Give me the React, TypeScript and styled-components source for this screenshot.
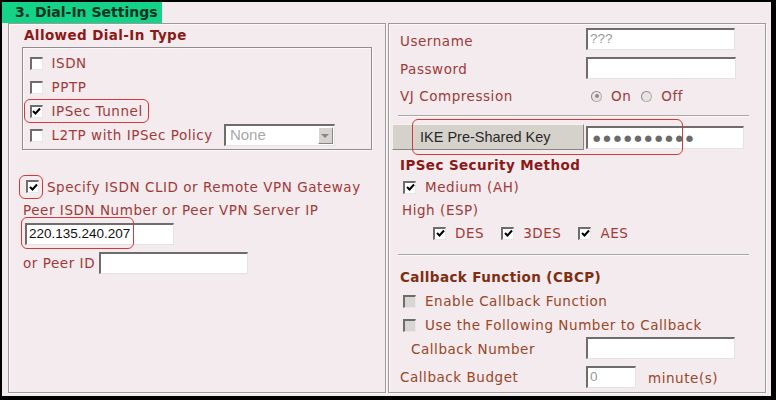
import React, { FC } from "react";
import styled, { createGlobalStyle } from "styled-components";

const GlobalStyle = createGlobalStyle`
  html, body {
    margin: 0;
    padding: 0;
    background: #000;
  }
  * {
    box-sizing: border-box;
  }
`;

const Frame = styled.div`
  width: 776px;
  height: 400px;
  padding: 2px 5px 4px 2px;
  background: #000;
`;

const Page = styled.div`
  width: 769px;
  height: 394px;
  background: #f3ebed;
  font-family: "DejaVu Sans", Verdana, sans-serif;
  font-size: 13.5px;
  letter-spacing: 0.55px;
  color: #a03a3a;
  display: flex;
  flex-direction: column;
`;

const Tab = styled.div`
  width: 160px;
  height: 21px;
  background: #14d288;
  color: #0c3322;
  font-weight: bold;
  font-size: 14px;
  letter-spacing: 0;
  line-height: 21px;
  padding-left: 13px;
  white-space: nowrap;
`;

const Panels = styled.div`
  display: flex;
  gap: 2px;
  padding-left: 6px;
  height: 370px;
`;

const Panel = styled.div<{ $width: number }>`
  width: ${(p) => p.$width}px;
  height: 100%;
  border: 1px solid #9c9a9a;
  box-shadow: inset 1px 1px 0 #fbf8f8, 1px 1px 0 #fbf8f8;
  display: flex;
  flex-direction: column;
`;

const Heading = styled.div<{ $brown?: boolean }>`
  font-weight: bold;
  font-size: 13.5px;
  letter-spacing: 0.4px;
  color: ${(p) => (p.$brown ? "#7e2e12" : "#8c1818")};
  line-height: 20px;
  white-space: nowrap;
`;

const Box = styled.div`
  margin: 2px 0 0 8px;
  width: 350px;
  height: 103px;
  border: 1px solid #8f8d8d;
  box-shadow: inset 1px 1px 0 #fbf8f8, 1px 1px 0 #fbf8f8;
  padding: 3px 0 0 1px;
  display: flex;
  flex-direction: column;
`;

const Row = styled.div<{ $h?: number; $mt?: number; $pl?: number }>`
  display: flex;
  align-items: center;
  height: ${(p) => p.$h ?? 24}px;
  margin-top: ${(p) => p.$mt ?? 0}px;
  padding-left: ${(p) => p.$pl ?? 0}px;
  white-space: nowrap;
  position: relative;
`;

const Mark = styled.div<{ $on?: boolean }>`
  display: inline-flex;
  align-items: center;
  height: 24px;
  padding: 0 5px 0 4.5px;
  border: 1.5px solid ${(p) => (p.$on ? "#d23a3a" : "transparent")};
  border-radius: 6px;
`;

const Box13 = styled.span<{ $disabled?: boolean }>`
  display: inline-flex;
  align-items: center;
  justify-content: center;
  width: 13px;
  height: 13px;
  flex: none;
  background: ${(p) => (p.$disabled ? "#d9d5d2" : "#fff")};
  border-style: solid;
  border-width: 2px 1px 1px 2px;
  border-color: #6e6c6c #e9e6e6 #e9e6e6 #6e6c6c;
`;

const Label = styled.span<{ $ml?: number; $brown?: boolean }>`
  margin-left: ${(p) => p.$ml ?? 9}px;
  color: ${(p) => (p.$brown ? "#9a4628" : "#a03a3a")};
`;

const Check: FC<{ checked?: boolean; disabled?: boolean }> = ({
  checked,
  disabled,
}) => (
  <Box13 $disabled={disabled}>
    {checked && (
      <svg width="9" height="9" viewBox="0 0 9 9">
        <path d="M1 4 L3.5 6.5 L8 1.5" stroke="#000" strokeWidth="2" fill="none" />
      </svg>
    )}
  </Box13>
);

const Radio = styled.span<{ $on?: boolean }>`
  display: inline-flex;
  align-items: center;
  justify-content: center;
  width: 11px;
  height: 11px;
  border-radius: 50%;
  background: #e8e4e2;
  border: 1px solid #b4b0ae;
  border-top-color: #8e8a88;
  border-left-color: #8e8a88;
  &::after {
    content: "";
    width: 4px;
    height: 4px;
    border-radius: 50%;
    background: ${(p) => (p.$on ? "#8e8a88" : "transparent")};
  }
`;

const Input = styled.div<{ $w: number; $h?: number; $gray?: boolean }>`
  width: ${(p) => p.$w}px;
  height: ${(p) => p.$h ?? 22}px;
  flex: none;
  background: #fff;
  border-style: solid;
  border-width: 2px 1px 1px 2px;
  border-color: #6e6c6c #e6e2e2 #e6e2e2 #6e6c6c;
  font-family: "Liberation Sans", Arial, sans-serif;
  font-size: 13.5px;
  letter-spacing: 0;
  line-height: 18px;
  padding-left: 2px;
  color: ${(p) => (p.$gray ? "#9a9a9a" : "#111")};
  overflow: hidden;
  white-space: nowrap;
`;

const Select = styled.div`
  margin-left: 5px;
  width: 111px;
  height: 22px;
  display: flex;
  background: #fff;
  border-style: solid;
  border-width: 2px 1px 1px 2px;
  border-color: #6e6c6c #e6e2e2 #e6e2e2 #6e6c6c;
  font-family: "Liberation Sans", Arial, sans-serif;
  font-size: 15px;
  letter-spacing: 0;
  color: #a8a8a8;
`;

const SelectText = styled.span`
  flex: 1;
  padding-left: 4px;
  line-height: 18px;
`;

const SelectArrow = styled.span`
  width: 15px;
  margin: 1px;
  background: #d6d2ce;
  border: 1px solid #fff;
  border-right-color: #8a8686;
  border-bottom-color: #8a8686;
  display: flex;
  align-items: center;
  justify-content: center;
  &::after {
    content: "";
    border-left: 4px solid transparent;
    border-right: 4px solid transparent;
    border-top: 4px solid #8a8686;
  }
`;

const Highlight = styled.div<{ $l: number; $t: number; $w: number; $h: number }>`
  position: absolute;
  left: ${(p) => p.$l}px;
  top: ${(p) => p.$t}px;
  width: ${(p) => p.$w}px;
  height: ${(p) => p.$h}px;
  border: 1.5px solid #d23a3a;
  border-radius: 6px;
  pointer-events: none;
`;

const Text = styled.div<{ $mt?: number; $pl?: number }>`
  margin-top: ${(p) => p.$mt ?? 0}px;
  padding-left: ${(p) => p.$pl ?? 0}px;
  line-height: 22px;
  white-space: nowrap;
`;

const LeftBody = styled.div`
  padding: 1px 0 0 5px;
  display: flex;
  flex-direction: column;
`;

const RightBody = styled.div`
  padding: 4px 0 0 11px;
  display: flex;
  flex-direction: column;
`;

const FieldRow = styled.div<{ $mt?: number; $h?: number; $brown?: boolean }>`
  display: grid;
  grid-template-columns: 186px auto 1fr;
  align-items: center;
  height: ${(p) => p.$h ?? 22}px;
  margin-top: ${(p) => p.$mt ?? 0}px;
  white-space: nowrap;
  color: ${(p) => (p.$brown ? "#9a4628" : "#a03a3a")};
`;

const FieldLabel = styled.span<{ $indent?: number; $drop?: number }>`
  padding-top: ${(p) => p.$drop ?? 2}px;
  padding-left: ${(p) => p.$indent ?? 0}px;
`;

const Inline = styled.div`
  display: flex;
  align-items: center;
  padding: 0 0 0 5px;
`;

const Separator = styled.div<{ $mt: number }>`
  margin: ${(p) => p.$mt}px 16px 0 -2px;
  height: 2px;
  border-top: 1px solid #a8a6a6;
  border-bottom: 1px solid #fbf8f8;
`;

const KeyRow = styled.div`
  display: flex;
  align-items: flex-start;
  margin: 7px 0 0 -8px;
  height: 27px;
  position: relative;
`;

const KeyButton = styled.div`
  width: 192px;
  height: 26px;
  background: #d5d1cb;
  border: 1px solid #f4f2ee;
  border-right-color: #8a8682;
  border-bottom-color: #8a8682;
  font-family: "Liberation Sans", Arial, sans-serif;
  font-size: 14.5px;
  letter-spacing: 0;
  color: #2a2a2a;
  line-height: 24px;
  padding-left: 27px;
`;

const Dots = styled.span`
  font-family: "DejaVu Sans", sans-serif;
  font-size: 8.5px;
  letter-spacing: 2.9px;
  color: #6a6a6a;
  line-height: 19px;
  padding-left: 3px;
`;

const Spacer = styled.span<{ $w: number }>`
  width: ${(p) => p.$w}px;
  flex: none;
`;

const App: FC = () => {
  return (
    <Frame>
      <GlobalStyle />
      <Page>
        <Tab>3. Dial-In Settings</Tab>
        <Panels>
          <Panel $width={378}>
            <LeftBody>
              <Heading style={{ paddingLeft: 10 }}>Allowed Dial-In Type</Heading>
              <Box>
                <Row>
                  <Mark>
                    <Check />
                    <Label>ISDN</Label>
                  </Mark>
                </Row>
                <Row>
                  <Mark>
                    <Check />
                    <Label>PPTP</Label>
                  </Mark>
                </Row>
                <Row>
                  <Mark $on>
                    <Check checked />
                    <Label>IPSec Tunnel</Label>
                  </Mark>
                </Row>
                <Row>
                  <Mark>
                    <Check />
                    <Label>L2TP with IPSec Policy</Label>
                  </Mark>
                  <Select>
                    <SelectText>None</SelectText>
                    <SelectArrow />
                  </Select>
                </Row>
              </Box>
              <Row $mt={24} $h={25} $pl={5}>
                <Mark $on style={{ padding: "0 3px 0 6px" }}>
                  <Check checked />
                </Mark>
                <Label $ml={4}>Specify ISDN CLID or Remote VPN Gateway</Label>
              </Row>
              <Text $pl={9}>Peer ISDN Number or Peer VPN Server IP</Text>
              <Row $mt={2} $h={22} $pl={11}>
                <Input $w={149}>220.135.240.207</Input>
                <Highlight $l={7} $t={-6} $w={113} $h={32} />
              </Row>
              <Row $mt={7} $h={22} $pl={9}>
                <Text>or Peer ID</Text>
                <Input $w={149} style={{ marginLeft: 4 }} />
              </Row>
            </LeftBody>
          </Panel>
          <Panel $width={378}>
            <RightBody>
              <FieldRow>
                <FieldLabel $drop={3}>Username</FieldLabel>
                <Input $w={149} $gray>
                  ???
                </Input>
              </FieldRow>
              <FieldRow $mt={7}>
                <FieldLabel>Password</FieldLabel>
                <Input $w={150} />
              </FieldRow>
              <FieldRow $mt={6}>
                <FieldLabel $drop={0}>VJ Compression</FieldLabel>
                <Inline>
                  <Radio $on />
                  <Label $ml={9}>On</Label>
                  <Radio style={{ marginLeft: 10 }} />
                  <Label $ml={9}>Off</Label>
                </Inline>
              </FieldRow>
              <Separator $mt={8} />
              <KeyRow>
                <KeyButton>IKE Pre-Shared Key</KeyButton>
                <Input $w={158} $h={23} style={{ marginLeft: 2, marginTop: 2 }}>
                  <Dots>●●●●●●●●●●</Dots>
                </Input>
                <Highlight $l={20} $t={-5} $w={271} $h={36} />
              </KeyRow>
              <Heading style={{ marginTop: 4 }}>IPSec Security Method</Heading>
              <Row $h={24} $pl={3}>
                <Check checked />
                <Label>Medium (AH)</Label>
              </Row>
              <Text $pl={2}>High (ESP)</Text>
              <Row $h={24} $pl={33}>
                <Check checked />
                <Label>DES</Label>
                <Spacer $w={17} />
                <Check checked />
                <Label>3DES</Label>
                <Spacer $w={17} />
                <Check checked />
                <Label>AES</Label>
              </Row>
              <Separator $mt={9} />
              <Heading $brown style={{ marginTop: 10, lineHeight: "22px" }}>
                Callback Function (CBCP)
              </Heading>
              <Row $mt={1} $h={24} $pl={3}>
                <Check disabled />
                <Label $brown>Enable Callback Function</Label>
              </Row>
              <Row $h={24} $pl={3}>
                <Check disabled />
                <Label $brown>Use the Following Number to Callback</Label>
              </Row>
              <FieldRow $brown>
                <FieldLabel $indent={11} $drop={1}>
                  Callback Number
                </FieldLabel>
                <Input $w={149} />
              </FieldRow>
              <FieldRow $mt={7} $brown>
                <FieldLabel $drop={0}>Callback Budget</FieldLabel>
                <Input $w={50} $gray>
                  0
                </Input>
                <Label $brown $ml={12} style={{ paddingTop: 2 }}>
                  minute(s)
                </Label>
              </FieldRow>
            </RightBody>
          </Panel>
        </Panels>
      </Page>
    </Frame>
  );
};

export default App;
